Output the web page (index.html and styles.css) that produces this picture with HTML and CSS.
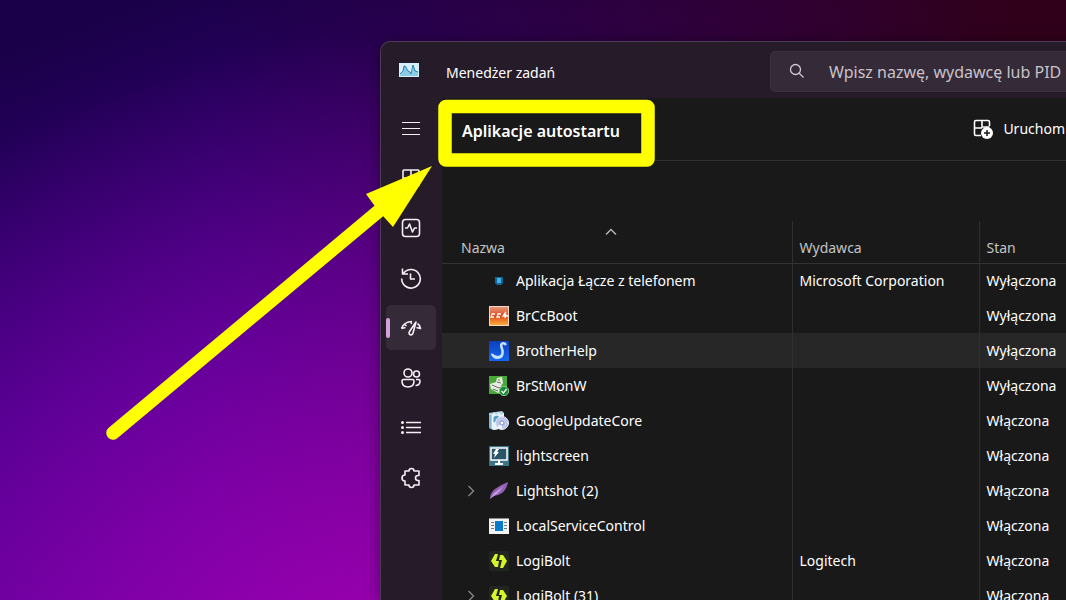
FILE: index.html
```html
<!DOCTYPE html>
<html lang="pl">
<head>
    <meta charset="UTF-8">
    <meta name="viewport" content="width=device-width, initial-scale=1.0">
    <title>Menedżer zadań</title>
    <link rel="stylesheet" href="styles.css">
</head>
<body>
    <div class="window">
        <header class="titlebar">
            <svg class="app-icon" viewBox="0 0 20 14">
                <rect width="20" height="14" fill="#d6effa"/>
                <path d="M1 12 L4 8 L5 3 L7 3 L9 8 L11 9 L13 11 L14 2 L16 7 L19 9 V13 H1Z" fill="#8ccbe8"/>
                <path d="M1 11 L4 8 L5 3 L6 3 L9 8 L11 9 L12 11 L14 2 L16 8 L19 9" fill="none" stroke="#2583b8"/>
            </svg>
            <span class="app-title">Menedżer zadań</span>
            <div class="search">
                <svg class="search-icon" viewBox="0 0 16 16">
                    <circle cx="6.5" cy="6.5" r="5"/>
                    <path d="M10 10 L14.5 14.5"/>
                </svg>
                <input type="text" placeholder="Wpisz nazwę, wydawcę lub PID" aria-label="Wpisz nazwę, wydawcę lub PID">
            </div>
        </header>

        <div class="content">
            <nav class="sidebar">
                <button type="button" class="nav-button" aria-label="Menu">
                    <svg class="thin" viewBox="0 0 22 22"><path d="M2 5.500H20 M2 11.500H20 M2 17.500H20"/></svg>
                </button>
                <button type="button" class="nav-button" aria-label="Procesy">
                    <svg viewBox="0 0 22 22"><rect x="3" y="3" width="16" height="16" rx="1"/><path d="M11 3V11 M3 11H19 M8 11V19"/></svg>
                </button>
                <button type="button" class="nav-button" aria-label="Wydajność">
                    <svg viewBox="0 0 22 22"><rect x="2.500" y="2.500" width="17" height="17" rx="3"/><path d="M5 11H7.500L9.500 7L12.500 15L14.500 11H17"/></svg>
                </button>
                <button type="button" class="nav-button" aria-label="Historia aplikacji">
                    <svg viewBox="0 0 22 22"><path d="M2.500 1.500V7H8 M3 7A9.300 9.300 0 1 1 1.700 11.500 M10.500 6.500V12H15"/></svg>
                </button>
                <button type="button" class="nav-button active" aria-label="Aplikacje autostartu">
                    <svg viewBox="0 0 22 22"><path d="M1.500 11.500C3 7.500 6.500 4.500 12 4.500 M1.500 11.500L5.500 10.500 M4.500 7L6.500 9 M11 4.500L11.500 7 M17.500 6.500C19 7.500 20 9 20.500 11.500L16.500 10.500 M16 5L9.500 14.500A2 2 0 1 0 13 16Z"/></svg>
                </button>
                <button type="button" class="nav-button" aria-label="Użytkownicy">
                    <svg viewBox="0 0 22 22"><circle cx="8" cy="6" r="4"/><circle cx="16.500" cy="7" r="3"/><path d="M3.500 12.500H12.500Q14 12.500 14 14C14 18 11.500 20 8 20S2 18 2 14Q2 12.500 3.500 12.500Z M16 12.500H18.500Q20 12.500 20 14C20 17 18 18.500 15.500 18.500"/></svg>
                </button>
                <button type="button" class="nav-button" aria-label="Szczegóły">
                    <svg viewBox="0 0 22 22"><path d="M6 5.500H21 M6 10.500H21 M6 15.500H21"/><g class="dots"><circle cx="2.500" cy="5.500" r="1.500"/><circle cx="2.500" cy="10.500" r="1.500"/><circle cx="2.500" cy="15.500" r="1.500"/></g></svg>
                </button>
                <button type="button" class="nav-button" aria-label="Usługi">
                    <svg viewBox="0 0 22 22"><path d="M5.500 4H9A2.500 2.500 0 0 1 14 4H19V8.500H18A2.500 2.500 0 0 0 18 13.500H19V18H14A2.500 2.500 0 0 1 9 18H5V14A3 3 0 0 1 5 8V4Z"/></svg>
                </button>
            </nav>

            <main class="panel">
                <div class="toolbar">
                    <h1>Aplikacje autostartu</h1>
                    <button type="button" class="run-button">
                        <svg viewBox="0 0 20 20">
                            <path d="M8 16.500H3Q1.500 16.500 1.500 15V3Q1.500 1.500 3 1.500H15Q16.500 1.500 16.500 3V7 M9 1.500V9 M1.500 9H9 M16.500 8H10" fill="none" stroke="#fff" stroke-width="1.600"/>
                            <circle cx="14" cy="14" r="6" fill="#fff"/>
                            <path d="M14 11V17 M11 14H17" stroke="#191919" stroke-width="1.500"/>
                        </svg>
                        Uruchom
                    </button>
                </div>

                <table class="apps">
                    <colgroup>
                        <col class="col-name">
                        <col class="col-publisher">
                        <col class="col-state">
                    </colgroup>
                    <thead>
                        <tr>
                            <th>
                                <svg class="sort-icon" viewBox="0 0 12 8"><path d="M1 6.500L6 1.500L11 6.500"/></svg>
                                Nazwa
                            </th>
                            <th>Wydawca</th>
                            <th>Stan</th>
                        </tr>
                    </thead>
                    <tbody>
                        <tr>
                            <td><div class="app"><span class="expander"></span>
                                <svg class="icon" viewBox="0 0 20 20"><path d="M6 6H14V12L12 14H8L6 12Z" fill="#12659a"/><rect x="8" y="7" width="4" height="5" fill="#3fb4e4"/></svg>
                                Aplikacja Łącze z telefonem</div></td>
                            <td>Microsoft Corporation</td>
                            <td>Wyłączona</td>
                        </tr>
                        <tr>
                            <td><div class="app"><span class="expander"></span>
                                <svg class="icon" viewBox="0 0 20 20">
                                    <defs><linearGradient id="cc" x2="0" y2="1"><stop stop-color="#e89a80"/><stop offset=".5" stop-color="#dc4a1c"/><stop offset="1" stop-color="#ffb33c"/></linearGradient></defs>
                                    <rect x=".5" y=".5" width="19" height="19" fill="url(#cc)" stroke="#f4d8c4"/>
                                    <path d="M6 8H3L2 11H5 M12 8H9L8 11H11 M17 6L14 10H19 M17 8L16 12" fill="none" stroke="#fff" stroke-width="1.300"/>
                                </svg>
                                BrCcBoot</div></td>
                            <td></td>
                            <td>Wyłączona</td>
                        </tr>
                        <tr class="hovered">
                            <td><div class="app"><span class="expander"></span>
                                <svg class="icon" viewBox="0 0 20 20">
                                    <defs><linearGradient id="bh" x2="0" y2="1"><stop stop-color="#0c3fbd"/><stop offset="1" stop-color="#1668f4"/></linearGradient></defs>
                                    <rect width="20" height="20" fill="url(#bh)"/>
                                    <path d="M17 4C15 1 11 2 12.500 6C14.500 11 14 16.500 9 16.500C6 16.500 4 15 3 13" fill="none" stroke="#c5e3ff" stroke-width="2.500"/>
                                    <path d="M2 12Q5 15 9 15L12 14Q11 18 8 18Q4 18 2 12Z" fill="#c5e3ff"/>
                                </svg>
                                BrotherHelp</div></td>
                            <td></td>
                            <td>Wyłączona</td>
                        </tr>
                        <tr>
                            <td><div class="app"><span class="expander"></span>
                                <svg class="icon" viewBox="0 0 20 20">
                                    <rect width="18" height="18" fill="#48a936"/>
                                    <path d="M1 8L7 6L8 2L13 1L14 7L12 10L17 12L9 17L2 13Z" fill="#e8ebe4"/>
                                    <path d="M8 6L12 7 M3 9L10 12L15 10 M9 4H11 M4 13L9 15" fill="none" stroke="#65705e"/>
                                    <circle cx="15" cy="15" r="4.700" fill="#188a36" stroke="#8fce91"/>
                                    <path d="M12.500 15L14.500 17L17.500 13" fill="none" stroke="#fff" stroke-width="1.300"/>
                                </svg>
                                BrStMonW</div></td>
                            <td></td>
                            <td>Wyłączona</td>
                        </tr>
                        <tr>
                            <td><div class="app"><span class="expander"></span>
                                <svg class="icon" viewBox="0 0 20 20">
                                    <path d="M0 2L13 0L15 2V17L4 19L0 17Z" fill="#a9d3e5"/>
                                    <path d="M3 4L5 1L7 4L10 1L12 4L15 2V17L5 19L3 17Z" fill="#e9f3fa"/>
                                    <path d="M1 4V17 M5 6L9 5V10L5 11Z" fill="#54a7c4" stroke="#599bb9"/>
                                    <circle cx="13" cy="12" r="6.500" fill="#bdc8ed" stroke="#e6eafc"/>
                                    <path d="M13 12L8 16A6 6 0 0 0 13 18Z" fill="#eff6ff"/>
                                    <circle cx="13" cy="12" r="2" fill="#fff" stroke="#8391bd"/>
                                </svg>
                                GoogleUpdateCore</div></td>
                            <td></td>
                            <td>Włączona</td>
                        </tr>
                        <tr>
                            <td><div class="app"><span class="expander"></span>
                                <svg class="icon" viewBox="0 0 20 20">
                                    <rect width="20" height="20" fill="#3c7488"/>
                                    <rect x="2" y="2" width="16" height="12" fill="#285568" stroke="#fff" stroke-width="1.500"/>
                                    <path d="M9 14H11V17H14V19H6V17H9Z M7 3L4 8H6L5 12L10 6H8L10 3Z" fill="#fff"/>
                                </svg>
                                lightscreen</div></td>
                            <td></td>
                            <td>Włączona</td>
                        </tr>
                        <tr>
                            <td><div class="app"><span class="expander"><svg viewBox="0 0 8 12"><path d="M1.500 1L6.500 6L1.500 11"/></svg></span>
                                <svg class="icon" viewBox="0 0 20 20">
                                    <path d="M1 18Q1 12 6 8Q11 4 19 1Q18 8 13 12Q9 15 4 15Z" fill="#9360b4"/>
                                    <path d="M1 18L5 12L15 5L9 12Z" fill="#c39be0"/>
                                </svg>
                                Lightshot (2)</div></td>
                            <td></td>
                            <td>Włączona</td>
                        </tr>
                        <tr>
                            <td><div class="app"><span class="expander"></span>
                                <svg class="icon" viewBox="0 0 20 20">
                                    <rect y="2" width="20" height="16" fill="#f3f3f3"/>
                                    <path d="M0 2.500H20" stroke="#8d8d8d"/>
                                    <rect x="6" y="5" width="8" height="10" fill="#087acb"/>
                                    <path d="M2 6.500H5 M2 9.500H5 M2 12.500H5 M15 6.500H18 M15 9.500H18 M15 12.500H18" stroke="#777"/>
                                </svg>
                                LocalServiceControl</div></td>
                            <td></td>
                            <td>Włączona</td>
                        </tr>
                        <tr>
                            <td><div class="app"><span class="expander"></span>
                                <svg class="icon" viewBox="0 0 20 20">
                                    <rect width="20" height="20" rx="2" fill="#222620"/>
                                    <path d="M9 3L7 10H10L9 16H6L2 10L6 3Z M11 17L13 9H10L11 4H14L18 10L14 17Z" fill="#d5f52c"/>
                                </svg>
                                LogiBolt</div></td>
                            <td>Logitech</td>
                            <td>Włączona</td>
                        </tr>
                        <tr>
                            <td><div class="app"><span class="expander"><svg viewBox="0 0 8 12"><path d="M1.500 1L6.500 6L1.500 11"/></svg></span>
                                <svg class="icon" viewBox="0 0 20 20">
                                    <rect width="20" height="20" rx="2" fill="#222620"/>
                                    <path d="M9 3L7 10H10L9 16H6L2 10L6 3Z M11 17L13 9H10L11 4H14L18 10L14 17Z" fill="#d5f52c"/>
                                </svg>
                                LogiBolt (31)</div></td>
                            <td></td>
                            <td>Włączona</td>
                        </tr>
                    </tbody>
                </table>
            </main>
        </div>
    </div>

    <!-- Yellow frame and arrow drawn over the window -->
    <svg class="annotation" viewBox="0 0 660 450">
        <rect x="445" y="106.500" width="203" height="53.500" rx="1" fill="none" stroke="#ff0" stroke-width="13.500" stroke-linejoin="round"/>
        <path d="M113 433L380 210" stroke="#ff0" stroke-width="13.500" stroke-linecap="round"/>
        <path d="M432 166L366 194L374 205L383 216L393 227Z" fill="#ff0"/>
    </svg>
</body>
</html>
```
FILE: styles.css
```css
* {
    box-sizing: border-box;
}
body {
    position: relative;
    margin: 0;
    height: 100vh;
    padding: 41px 0 0 380px;
    overflow: hidden;
    font-family: "Segoe UI", "Noto Sans", "Open Sans", sans-serif;
    font-size: 14px;
    line-height: 20px;
    color: #fff;
    background:
        radial-gradient(ellipse 70% 110% at 38% 115%, #a000b4, rgba(140, 0, 168, 0) 100%),
        linear-gradient(to right, rgba(48, 0, 26, 0) 20%, #30001a 95%),
        linear-gradient(160deg, #1a0048 5%, #3a0088 45%, #6a00a4 90%);
}
button, input {
    font: inherit;
    color: inherit;
    border: 0;
    background: none;
    padding: 0;
}

/* Window */
.window {
    display: flex;
    flex-direction: column;
    height: 100%;
    margin-right: -40px; /* runs past the right edge of the screen */
    border: 1px solid #4d3a55;
    border-bottom: 0;
    border-radius: 10px 0 0 0;
    background: #261b29;
    box-shadow: 0 2px 16px rgba(0, 0, 0, 0.4);
    overflow: hidden;
}
.titlebar {
    display: flex;
    flex-shrink: 0;
    align-items: center;
    height: 56px;
    padding-left: 18px;
}
.app-icon {
    width: 20px;
    height: 14px;
}
.app-title {
    width: 324px;
    margin-left: 27px;
    padding-top: 5px;
}
.search {
    display: flex;
    flex: 1;
    align-items: center;
    gap: 24px;
    height: 41px;
    padding-left: 18px;
    margin-top: 2px;
    border: 1px solid #3d313f;
    border-radius: 5px;
    background: #352a37;
}
.search-icon {
    width: 16px;
    height: 16px;
    fill: none;
    stroke: #cfc8d0;
    stroke-width: 1.3;
}
.search input {
    flex: 1;
    min-width: 0;
    padding-top: 1px;
    font-size: 16px;
}
.search input::placeholder {
    color: #c9c2ca;
    opacity: 1;
}

/* Sidebar */
.content {
    display: flex;
    flex: 1;
    min-height: 0;
}
.sidebar {
    display: flex;
    flex-direction: column;
    gap: 5px;
    width: 61px;
    padding: 7px 6px 0 5px;
}
.nav-button {
    position: relative;
    display: flex;
    align-items: center;
    justify-content: center;
    height: 45px;
    border-radius: 5px;
}
.nav-button svg {
    width: 22px;
    height: 22px;
    fill: none;
    stroke: #f4eef5;
    stroke-width: 1.6;
    stroke-linejoin: round;
}
.nav-button svg.thin {
    stroke-width: 1.1;
}
.nav-button .dots {
    fill: #f4eef5;
    stroke: none;
}
.active {
    background: #352a38;
}
.active::before {
    content: "";
    position: absolute;
    left: 0;
    top: 13px;
    width: 4px;
    height: 20px;
    border-radius: 2px;
    background: #d3a1d8;
}

/* Main panel */
.panel {
    flex: 1;
    min-width: 0;
    background: #191919;
}
.toolbar {
    display: flex;
    align-items: center;
    justify-content: space-between;
    height: 63px;
    padding: 0 40px 0 20px;
    border-bottom: 1px solid #303030;
}
h1 {
    margin: 0;
    padding-top: 4px;
    font-size: 16px;
    font-weight: 600;
}
.run-button {
    display: flex;
    align-items: center;
    gap: 10px;
}
.run-button svg {
    width: 20px;
    height: 20px;
}

/* Startup apps table */
.apps {
    width: 100%;
    margin-top: 60px;
    table-layout: fixed;
    border-collapse: collapse;
}
.col-name {
    width: 350px;
}
.col-publisher {
    width: 187px;
}
.apps th {
    position: relative;
    height: 42px;
    padding: 12px 7px 0;
    font-weight: normal;
    text-align: left;
    color: #c4c4c4;
    border-bottom: 1px solid #333;
}
.apps th:first-child {
    padding-left: 19px;
}
.sort-icon {
    position: absolute;
    top: 7px;
    left: 50%;
    width: 12px;
    height: 8px;
    margin-left: -12px;
    fill: none;
    stroke: #b8b8b8;
    stroke-width: 1.4;
}
.apps td {
    height: 35px;
    padding: 0 7px;
}
.apps th + th, .apps td + td {
    border-left: 1px solid #303030;
}
.apps td:first-child {
    padding-left: 25px;
}
.hovered {
    background: #272727;
}
.app {
    display: flex;
    align-items: center;
}
.expander {
    width: 22px;
    height: 12px;
}
.expander svg {
    display: block;
    width: 8px;
    height: 12px;
    fill: none;
    stroke: #858585;
    stroke-width: 1.4;
}
.icon {
    width: 20px;
    height: 20px;
    margin-right: 7px;
}

.annotation {
    position: absolute;
    top: 0;
    left: 0;
    width: 660px;
    height: 450px;
    pointer-events: none;
}
```
